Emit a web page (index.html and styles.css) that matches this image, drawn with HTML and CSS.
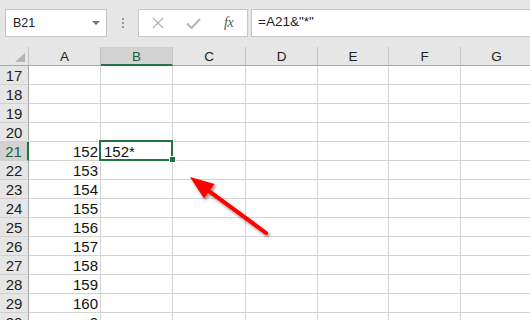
FILE: index.html
```html
<!DOCTYPE html>
<html>
<head>
<meta charset="utf-8">
<link rel="stylesheet" href="styles.css">
</head>
<body>
<div class="app">
  <div class="toolbar">
    <div class="namebox"><span class="ref">B21</span><span class="caret"></span></div>
    <div class="grip"><i></i><i></i><i></i></div>
    <div class="fxbtns">
      <svg class="ico" width="12" height="12" viewBox="0 0 12 12"><path d="M1 1 L11 11 M11 1 L1 11" stroke="#b8b8b8" stroke-width="1.4" fill="none"/></svg>
      <svg class="ico" width="15" height="11" viewBox="0 0 15 11"><path d="M1 5.5 L5.5 10 L14 1" stroke="#b8b8b8" stroke-width="2.2" fill="none"/></svg>
      <span class="fx">fx</span>
    </div>
    <div class="formula">=A21&amp;"*"</div>
  </div>
  <div class="sheet">
    <div class="hc corner"><span class="tri"></span></div>
    <div class="hc">A</div><div class="hc sel-h">B</div><div class="hc">C</div><div class="hc">D</div><div class="hc">E</div><div class="hc">F</div><div class="hc">G</div>

    <div class="rh">17</div><div class="c"></div><div class="c"></div><div class="c"></div><div class="c"></div><div class="c"></div><div class="c"></div><div class="c"></div>
    <div class="rh">18</div><div class="c"></div><div class="c"></div><div class="c"></div><div class="c"></div><div class="c"></div><div class="c"></div><div class="c"></div>
    <div class="rh">19</div><div class="c"></div><div class="c"></div><div class="c"></div><div class="c"></div><div class="c"></div><div class="c"></div><div class="c"></div>
    <div class="rh">20</div><div class="c"></div><div class="c"></div><div class="c"></div><div class="c"></div><div class="c"></div><div class="c"></div><div class="c"></div>
    <div class="rh sel-r">21</div><div class="c num">152</div><div class="c txt active">152*<span class="selbox"></span><span class="handle"></span></div><div class="c"></div><div class="c"></div><div class="c"></div><div class="c"></div><div class="c"></div>
    <div class="rh">22</div><div class="c num">153</div><div class="c"></div><div class="c"></div><div class="c"></div><div class="c"></div><div class="c"></div><div class="c"></div>
    <div class="rh">23</div><div class="c num">154</div><div class="c"></div><div class="c"></div><div class="c"></div><div class="c"></div><div class="c"></div><div class="c"></div>
    <div class="rh">24</div><div class="c num">155</div><div class="c"></div><div class="c"></div><div class="c"></div><div class="c"></div><div class="c"></div><div class="c"></div>
    <div class="rh">25</div><div class="c num">156</div><div class="c"></div><div class="c"></div><div class="c"></div><div class="c"></div><div class="c"></div><div class="c"></div>
    <div class="rh">26</div><div class="c num">157</div><div class="c"></div><div class="c"></div><div class="c"></div><div class="c"></div><div class="c"></div><div class="c"></div>
    <div class="rh">27</div><div class="c num">158</div><div class="c"></div><div class="c"></div><div class="c"></div><div class="c"></div><div class="c"></div><div class="c"></div>
    <div class="rh">28</div><div class="c num">159</div><div class="c"></div><div class="c"></div><div class="c"></div><div class="c"></div><div class="c"></div><div class="c"></div>
    <div class="rh">29</div><div class="c num">160</div><div class="c"></div><div class="c"></div><div class="c"></div><div class="c"></div><div class="c"></div><div class="c"></div>
    <div class="rh">30</div><div class="c num">0</div><div class="c"></div><div class="c"></div><div class="c"></div><div class="c"></div><div class="c"></div><div class="c"></div>
  </div>
  <svg class="arrow" width="100" height="80" viewBox="180 170 100 80">
    <defs>
      <filter id="sh" x="-30%" y="-30%" width="160%" height="160%">
        <feDropShadow dx="1.5" dy="2" stdDeviation="1.5" flood-color="#000" flood-opacity="0.45"/>
      </filter>
    </defs>
    <g filter="url(#sh)">
      <line x1="208" y1="190.3" x2="266" y2="233" stroke="#ff0000" stroke-width="4" stroke-linecap="round"/>
      <polygon points="190,177 214.6,183.9 204,198.4" fill="#ff0000"/>
    </g>
  </svg>
</div>
</body>
</html>
```
FILE: styles.css
```css
html, body {
  margin: 0;
  padding: 0;
}
body {
  width: 530px;
  height: 320px;
  overflow: hidden;
  background: #fff;
  font-family: "Liberation Sans", Arial, sans-serif;
}
.app {
  position: relative;
  width: 530px;
  height: 320px;
  overflow: hidden;
}
.toolbar {
  height: 47px;
  box-sizing: border-box;
  background: #e6e6e6;
  display: flex;
  align-items: flex-start;
  padding: 9px 0 0 5px;
}
.namebox {
  width: 102px;
  height: 28px;
  box-sizing: border-box;
  background: #fff;
  border: 1px solid #c6c6c6;
  display: flex;
  align-items: center;
  justify-content: space-between;
  padding: 0 6px 0 7px;
}
.ref {
  font-size: 12.5px;
  color: #222;
}
.caret {
  width: 0;
  height: 0;
  border-left: 4px solid transparent;
  border-right: 4px solid transparent;
  border-top: 4px solid #777;
}
.grip {
  width: 31px;
  height: 28px;
  display: flex;
  flex-direction: column;
  align-items: center;
  justify-content: center;
  gap: 2px;
}
.grip i {
  display: block;
  width: 2px;
  height: 2px;
  background: #9a9a9a;
}
.fxbtns {
  width: 110px;
  height: 28px;
  box-sizing: border-box;
  background: #fff;
  border: 1px solid #c6c6c6;
  display: flex;
  align-items: center;
  padding: 0 0 0 13px;
}
.fxbtns .ico:first-child {
  margin-right: 22px;
}
.fxbtns .ico:nth-child(2) {
  margin-right: 23px;
}
.fx {
  font-family: "Liberation Serif", "Times New Roman", serif;
  font-style: italic;
  font-size: 14px;
  color: #555;
  letter-spacing: -0.5px;
}
.formula {
  margin-left: 3px;
  flex: 1;
  height: 28px;
  box-sizing: border-box;
  background: #fff;
  border: 1px solid #c6c6c6;
  border-right: none;
  font-size: 13.5px;
  color: #222;
  line-height: 24px;
  padding-left: 6px;
}
.sheet {
  display: grid;
  grid-template-columns: 29px 72px 72px 73px 72px 71px 72px 72px;
  grid-auto-rows: 19px;
  width: 533px;
}
.sheet > div {
  box-sizing: border-box;
}
.hc {
  background: #e6e6e6;
  border-right: 1px solid #c4c4c4;
  border-bottom: 1px solid #a6a6a6;
  font-size: 13.5px;
  color: #222;
  text-align: center;
  line-height: 20px;
}
.corner {
  position: relative;
  border-right-color: #c4c4c4;
}
.tri {
  position: absolute;
  right: 3px;
  bottom: 3px;
  width: 0;
  height: 0;
  border-left: 10px solid transparent;
  border-bottom: 9px solid #b5b5b5;
}
.sel-h {
  background: #d2d2d2;
  border-bottom: 2px solid #217346;
  color: #1b5e37;
}
.rh {
  background: #e6e6e6;
  border-right: 1px solid #a6a6a6;
  border-bottom: 1px solid #d0d0d0;
  font-family: "Liberation Sans Narrow", "Arial Narrow", "Liberation Sans", sans-serif;
  font-size: 15px;
  color: #222;
  text-align: center;
  line-height: 20px;
}
.sel-r {
  background: #d2d2d2;
  border-right: 2px solid #217346;
  color: #1b5e37;
}
.c {
  border-right: 1px solid #d4d4d4;
  border-bottom: 1px solid #d4d4d4;
  font-family: "Liberation Sans Narrow", "Arial Narrow", "Liberation Sans", sans-serif;
  font-size: 15px;
  color: #111;
  line-height: 20px;
  white-space: nowrap;
}
.num {
  text-align: right;
  padding-right: 2px;
}
.txt {
  padding-left: 3px;
}
.active {
  position: relative;
}
.selbox {
  position: absolute;
  left: -2px;
  top: -2px;
  right: -1px;
  bottom: -1px;
  border: 2px solid #217346;
}
.handle {
  position: absolute;
  left: 68px;
  top: 14px;
  width: 5px;
  height: 5px;
  background: #217346;
  border: 1px solid #fff;
}
.arrow {
  position: absolute;
  left: 180px;
  top: 170px;
}
```
